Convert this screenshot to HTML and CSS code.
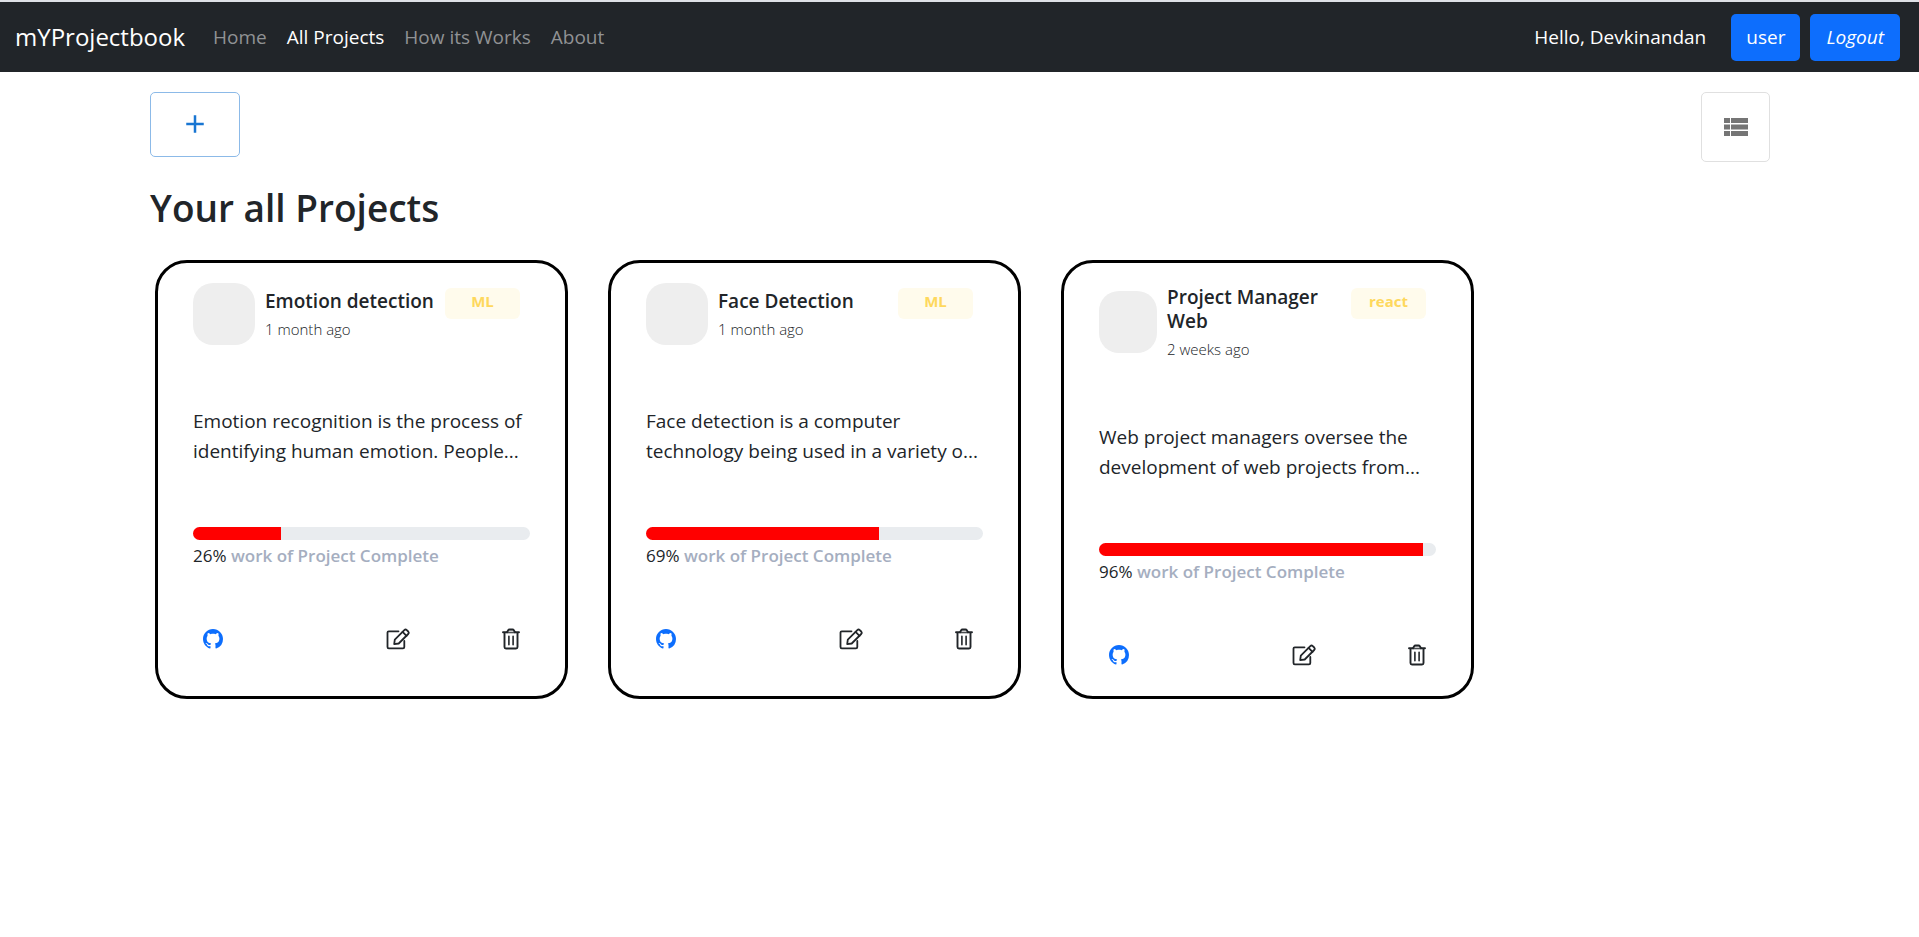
FILE: index.html
```html
<!DOCTYPE html>
<html lang="en">
<head>
<meta charset="utf-8">
<meta name="viewport" content="width=device-width, initial-scale=1">
<title>mYProjectbook</title>
<link rel="stylesheet" href="styles.css">
</head>
<body>
<svg class="sprite" aria-hidden="true">
  <symbol id="github" viewBox="0 0 16 16"><path fill="currentColor" d="M8 0C3.58 0 0 3.58 0 8c0 3.54 2.29 6.53 5.47 7.59.4.07.55-.17.55-.38 0-.19-.01-.82-.01-1.49-2.01.37-2.53-.49-2.69-.94-.09-.23-.48-.94-.82-1.13-.28-.15-.68-.52-.01-.53.63-.01 1.08.58 1.23.82.72 1.21 1.87.87 2.33.66.07-.52.28-.87.51-1.07-1.78-.2-3.64-.89-3.64-3.95 0-.87.31-1.59.82-2.15-.08-.2-.36-1.02.08-2.12 0 0 .67-.21 2.2.82.64-.18 1.32-.27 2-.27s1.36.09 2 .27c1.53-1.04 2.2-.82 2.2-.82.44 1.1.16 1.92.08 2.12.51.56.82 1.27.82 2.15 0 3.07-1.87 3.75-3.65 3.95.29.25.54.73.54 1.48 0 1.07-.01 1.93-.01 2.2 0 .21.15.46.55.38A8.01 8.01 0 0 0 16 8c0-4.42-3.58-8-8-8z"/></symbol>
  <symbol id="edit" viewBox="0 0 24 22"><g fill="none" stroke="currentColor" stroke-width="1.8" stroke-linejoin="round" stroke-linecap="round"><path d="M12.500 3.300H2.800Q1.500 3.300 1.500 4.600V19Q1.500 20.300 2.800 20.300H17Q18.300 20.300 18.300 19V13"/><path d="M8.200 16.200L8.800 11.600L18.300 2.100Q19.500 1 20.800 2.100L22.200 3.500Q23.300 4.800 22.200 6L12.700 15.500Z"/><path d="M16.600 3.900L20.500 7.800"/></g></symbol>
  <symbol id="trash" viewBox="0 0 18 22"><g fill="none" stroke="currentColor" stroke-width="1.900" stroke-linecap="round" stroke-linejoin="round"><path d="M1 4.300H17M2.500 4.300V19Q2.500 20.500 4 20.500H14Q15.500 20.500 15.500 19V4.300"/><path fill="#ccc" d="M5 4.200L6.200 2.200Q6.600 1.500 7.400 1.500H10.600Q11.400 1.500 11.800 2.200L13 4.200"/><path d="M6.900 8.200V16.800M11.100 8.200V16.800" stroke-width="1.600"/></g></symbol>
</svg>

<header class="navbar">
  <a class="brand" href="#">mYProjectbook</a>
  <nav class="nav-links" aria-label="Main">
    <a href="#">Home</a>
    <a class="active" href="#" aria-current="page">All Projects</a>
    <a href="#">How its Works</a>
    <a href="#">About</a>
  </nav>
  <div class="account">
    <span class="greeting">Hello, Devkinandan</span>
    <button class="btn" type="button">user</button>
    <button class="btn logout" type="button">Logout</button>
  </div>
</header>

<main class="page">
  <div class="toolbar">
    <button class="add" type="button" aria-label="Add project"><svg viewBox="0 0 24 24" aria-hidden="true"><path fill="currentColor" d="M19 13h-6v6h-2v-6H5v-2h6V5h2v6h6v2z"/></svg></button>
    <button class="view" type="button" aria-label="List view"><svg viewBox="0 0 24 18" aria-hidden="true"><path fill="currentColor" d="M0 0h6v5H0zM7 0H24v5H7zM0 6.500h6v5H0zM7 6.500H24v5H7zM0 13h6v5H0zM7 13H24v5H7z"/></svg></button>
  </div>
  <h1 class="title">Your all Projects</h1>

  <div class="cards">
    <article class="card">
      <div class="card-head">
        <div class="avatar"></div>
        <div class="details"><h2>Emotion detection</h2><span>1 month ago</span></div>
        <div class="badge">ML</div>
      </div>
      <p class="about">Emotion recognition is the process of identifying human emotion. People...</p>
      <div class="progress"><div class="bar" style="width:26%"></div></div>
      <p class="status"><span>26%</span> work of Project Complete</p>
      <div class="actions">
        <a href="#" aria-label="GitHub"><svg class="github" aria-hidden="true"><use href="#github"/></svg></a>
        <button class="edit-btn" type="button" aria-label="Edit"><svg class="edit" aria-hidden="true"><use href="#edit"/></svg></button>
        <button type="button" aria-label="Delete"><svg class="trash" aria-hidden="true"><use href="#trash"/></svg></button>
      </div>
    </article>
    <article class="card">
      <div class="card-head">
        <div class="avatar"></div>
        <div class="details"><h2>Face Detection</h2><span>1 month ago</span></div>
        <div class="badge">ML</div>
      </div>
      <p class="about">Face detection is a computer technology being used in a variety o...</p>
      <div class="progress"><div class="bar" style="width:69%"></div></div>
      <p class="status"><span>69%</span> work of Project Complete</p>
      <div class="actions">
        <a href="#" aria-label="GitHub"><svg class="github" aria-hidden="true"><use href="#github"/></svg></a>
        <button class="edit-btn" type="button" aria-label="Edit"><svg class="edit" aria-hidden="true"><use href="#edit"/></svg></button>
        <button type="button" aria-label="Delete"><svg class="trash" aria-hidden="true"><use href="#trash"/></svg></button>
      </div>
    </article>
    <article class="card">
      <div class="card-head">
        <div class="avatar"></div>
        <div class="details"><h2>Project Manager Web</h2><span>2 weeks ago</span></div>
        <div class="badge">react</div>
      </div>
      <p class="about">Web project managers oversee the development of web projects from...</p>
      <div class="progress"><div class="bar" style="width:96%"></div></div>
      <p class="status"><span>96%</span> work of Project Complete</p>
      <div class="actions">
        <a href="#" aria-label="GitHub"><svg class="github" aria-hidden="true"><use href="#github"/></svg></a>
        <button class="edit-btn" type="button" aria-label="Edit"><svg class="edit" aria-hidden="true"><use href="#edit"/></svg></button>
        <button type="button" aria-label="Delete"><svg class="trash" aria-hidden="true"><use href="#trash"/></svg></button>
      </div>
    </article>
  </div>
</main>
</body>
</html>
```

FILE: styles.css
```css
* { box-sizing: border-box; }
body {
  margin: 0;
  border-top: 2px solid #dee1e6;
  background: #fff;
  color: #212529;
  font-family: "Segoe UI", "Open Sans", "Noto Sans", sans-serif;
  font-size: 19px;
  line-height: 30px;
}
h1, h2, p { margin: 0; }
a { color: inherit; text-decoration: none; }
button { font: inherit; cursor: pointer; }
svg { display: block; }
.sprite { display: none; }

.navbar {
  display: flex;
  align-items: center;
  min-height: 70px;
  padding: 0 19px 0 15px;
  background: #212529;
  color: #fff;
}
.brand { margin-right: 28px; font-size: 24px; }
.nav-links { display: flex; gap: 20px; color: #909294; }
.nav-links .active { color: #fff; }
.account { display: flex; align-items: center; gap: 10px; margin-left: auto; }
.greeting { margin-right: 15px; }
.btn {
  min-height: 47px;
  padding: 0 15px;
  border: 0;
  border-radius: 5px;
  background: #0d6efd;
  color: #fff;
}
.logout { padding: 0 16px; font-style: italic; }

.page { padding: 20px 149px 40px 150px; }
.toolbar { display: flex; justify-content: space-between; align-items: flex-start; }
.add, .view {
  display: flex;
  justify-content: center;
  align-items: center;
  border-radius: 5px;
  background: #fff;
}
.add {
  width: 90px;
  height: 65px;
  padding: 0 0 2px;
  border: 1px solid #8cbae8;
  color: #1976d2;
}
.add svg { width: 30px; height: 30px; }
.view {
  width: 69px;
  height: 70px;
  padding: 0;
  border: 1px solid #e0e0e0;
  color: #757575;
}
.view svg { width: 24px; height: 18px; }

.title { margin-top: 22px; font-size: 37px; line-height: 48px; font-weight: 600; }

.cards { display: flex; flex-wrap: wrap; gap: 40px; margin-top: 28px; padding-left: 5px; }
.card {
  flex: 0 0 413px;
  min-height: 439px;
  padding: 20px 35px 30px;
  border: 3px solid #000;
  border-radius: 32px;
}
.card-head { display: flex; align-items: center; }
.avatar { flex: 0 1 62px; height: 62px; border-radius: 20px; background: #eee; }
.details { margin-left: 10px; padding-top: 2px; }
.details h2 { margin-bottom: 4px; font-size: 19px; line-height: 24px; font-weight: 600; }
.details span { display: block; font-size: 15px; line-height: 24px; font-weight: 300; }
.badge {
  flex: none;
  align-self: flex-start;
  width: 75px;
  height: 31px;
  margin: 5px 10px 0 auto;
  border-radius: 6px;
  background: #fffbec;
  color: #fed85d;
  font-size: 15px;
  line-height: 27px;
  font-weight: 700;
  text-align: center;
}
.about { margin-top: 61px; }
.progress { height: 13px; margin-top: 61px; overflow: hidden; border-radius: 7px; background: #e9ecef; }
.bar { height: 100%; background: #f00; }
.status { margin-top: 1px; color: #a5aec0; font-size: 17px; font-weight: 600; }
.status span { color: #212529; font-weight: 400; }
.actions { display: flex; align-items: center; margin-top: 57px; padding: 0 10px; color: #212529; }
.actions a { color: #0d6efd; }
.actions button { padding: 0; border: 0; background: none; color: inherit; }
.edit-btn { margin: 0 92px 0 auto; }
.github { width: 20px; height: 20px; }
.edit { width: 24px; height: 22px; }
.trash { width: 18px; height: 22px; }
```
